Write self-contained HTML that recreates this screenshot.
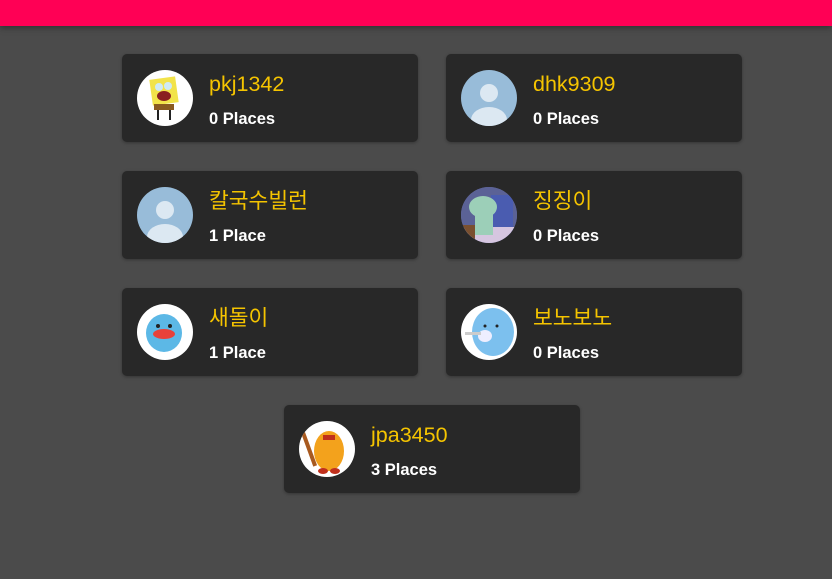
<!DOCTYPE html>
<html><head><meta charset="utf-8"><style>
*{margin:0;padding:0;box-sizing:border-box}
body{width:832px;height:579px;background:#4b4b4b;font-family:"Liberation Sans","Noto Sans CJK KR",sans-serif;position:relative;overflow:hidden}
.bar{position:absolute;left:0;top:0;width:832px;height:26px;background:#ff0055;box-shadow:0 2px 6px rgba(0,0,0,.35)}
.card{position:absolute;width:296px;height:88px;background:#282828;border-radius:5px;box-shadow:0 1px 3px rgba(0,0,0,.3)}
.av{position:absolute;left:15px;top:16px;width:56px;height:56px;border-radius:50%;overflow:hidden;background:#fff}
.name{position:absolute;left:87px;top:16px;color:#f5c400;font-size:21.5px;line-height:28px}
.pl{position:absolute;left:87px;top:52px;color:#fff;font-weight:bold;font-size:16.5px;line-height:26px}
</style></head><body>
<div class="bar"></div>

<div class="card" style="left:122px;top:54px"><div class="av"><svg width="56" height="56"><rect x="14" y="8" width="26" height="26" fill="#f2e34a" transform="rotate(-8 27 21)"/><ellipse cx="27" cy="26" rx="7" ry="5" fill="#8a2020"/><circle cx="22" cy="17" r="4" fill="#cfeaf5"/><circle cx="31" cy="16" r="4" fill="#cfeaf5"/><rect x="17" y="34" width="20" height="6" fill="#8a5a20"/><rect x="20" y="40" width="2" height="10" fill="#222"/><rect x="32" y="40" width="2" height="10" fill="#222"/></svg></div><div class="name">pkj1342</div><div class="pl">0 Places</div></div>

<div class="card" style="left:446px;top:54px"><div class="av" style="background:#98bcd9"><svg width="56" height="56"><circle cx="28" cy="23" r="9" fill="#dce8f2"/><ellipse cx="28" cy="50" rx="18" ry="13" fill="#dce8f2"/></svg></div><div class="name">dhk9309</div><div class="pl">0 Places</div></div>

<div class="card" style="left:122px;top:171px"><div class="av" style="background:#98bcd9"><svg width="56" height="56"><circle cx="28" cy="23" r="9" fill="#dce8f2"/><ellipse cx="28" cy="50" rx="18" ry="13" fill="#dce8f2"/></svg></div><div class="name">칼국수빌런</div><div class="pl">1 Place</div></div>

<div class="card" style="left:446px;top:171px"><div class="av" style="background:#6a6f9a"><svg width="56" height="56"><rect x="0" y="0" width="56" height="56" fill="#5b6296"/><rect x="30" y="8" width="22" height="40" fill="#4a5cb0"/><rect x="0" y="40" width="56" height="16" fill="#d6c6e0"/><ellipse cx="22" cy="20" rx="14" ry="11" fill="#9ccfb8"/><rect x="14" y="26" width="18" height="22" fill="#9ccfb8"/><rect x="2" y="38" width="12" height="18" fill="#7a5030"/></svg></div><div class="name">징징이</div><div class="pl">0 Places</div></div>

<div class="card" style="left:122px;top:288px"><div class="av"><svg width="56" height="56"><ellipse cx="27" cy="29" rx="18" ry="19" fill="#5cb8e6"/><ellipse cx="27" cy="30" rx="11" ry="5" fill="#e8413a"/><circle cx="21" cy="22" r="2" fill="#222"/><circle cx="33" cy="22" r="2" fill="#222"/></svg></div><div class="name">새돌이</div><div class="pl">1 Place</div></div>

<div class="card" style="left:446px;top:288px"><div class="av"><svg width="56" height="56"><ellipse cx="32" cy="28" rx="21" ry="24" fill="#7cc0ee"/><ellipse cx="24" cy="32" rx="7" ry="6" fill="#eef"/><rect x="4" y="28" width="16" height="3" fill="#ccc"/><circle cx="24" cy="22" r="1.5" fill="#222"/><circle cx="36" cy="22" r="1.5" fill="#222"/></svg></div><div class="name">보노보노</div><div class="pl">0 Places</div></div>

<div class="card" style="left:284px;top:405px"><div class="av"><svg width="56" height="56"><ellipse cx="30" cy="30" rx="15" ry="20" fill="#f3a21c"/><rect x="24" y="14" width="12" height="5" fill="#c0301c"/><rect x="8" y="10" width="4" height="36" fill="#a85a20" transform="rotate(-20 10 28)"/><ellipse cx="24" cy="50" rx="5" ry="3" fill="#c0301c"/><ellipse cx="36" cy="50" rx="5" ry="3" fill="#c0301c"/></svg></div><div class="name">jpa3450</div><div class="pl">3 Places</div></div>
</body></html>
